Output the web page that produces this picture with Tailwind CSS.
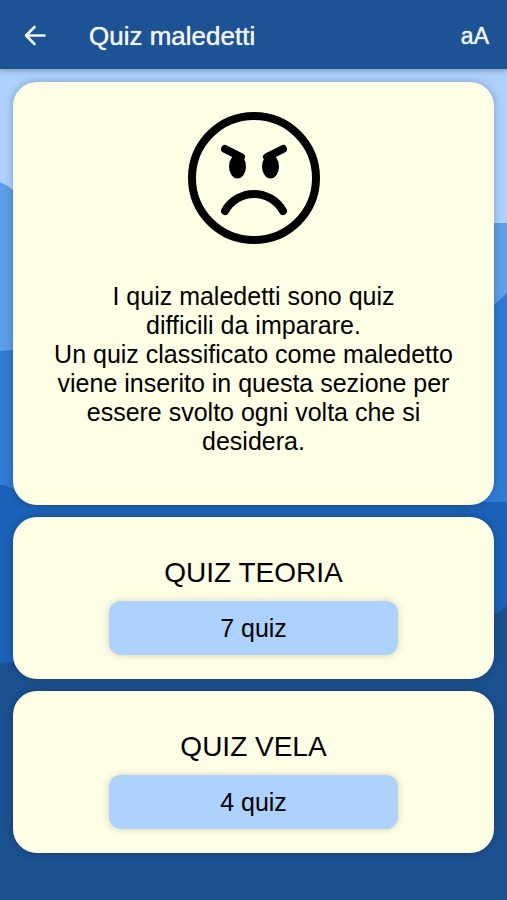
<!DOCTYPE html>
<html lang="it">
<head>
<meta charset="utf-8">
<meta name="viewport" content="width=device-width, initial-scale=1">
<title>Quiz maledetti</title>
<script src="https://cdn.jsdelivr.net/npm/@tailwindcss/browser@4"></script>
</head>
<body class="relative isolate flex min-h-screen flex-col bg-[#1b5190] font-['Liberation_Sans',Arial,sans-serif] text-black">
<!-- Layered wave background -->
<svg class="absolute inset-0 -z-10 h-full w-full" viewBox="0 0 507 900" preserveAspectRatio="none" aria-hidden="true">
<rect width="507" height="900" fill="#acd2fd"/>
<path d="M0 182Q7 185 13 190C100 250 380 223 495 223H507V900H0Z" fill="#5d9fea"/>
<path d="M0 351L13 350C150 370 400 370 495 304L507 293V900H0Z" fill="#307bd5"/>
<path d="M0 485Q7 485 13 489C150 510 380 502 495 502H507V900H0Z" fill="#1b62b8"/>
<path d="M0 663L13 662C150 640 380 640 495 614Q502 611 507 604V900H0Z" fill="#1b5190"/>
</svg>
<header class="flex h-[69px] items-center bg-[#1d5394] px-[18px] pt-[2px] text-[#eff6ff] shadow-[0_1px_6px_rgba(0,0,0,0.35)]">
<button type="button" aria-label="Indietro" class="flex size-9 shrink-0 items-center justify-center">
<svg class="size-6" viewBox="0 0 24 24" fill="none" stroke="currentColor" stroke-width="2.6" stroke-linecap="round" stroke-linejoin="round" aria-hidden="true"><path d="M20.5 11.5H2.5M10.5 3L2 11.500L10.5 20"/></svg>
</button>
<h1 class="ml-[35px] flex-1 text-[26px] leading-7 text-shadow-[0_0_1px_#eff6ff]">Quiz maledetti</h1>
<button type="button" aria-label="Dimensione testo" class="text-[23px] leading-7 text-shadow-[0_0_1px_#eff6ff]">aA</button>
</header>
<main class="flex flex-col gap-3 px-[13px] pt-[13px]">
<section class="flex flex-col items-center rounded-3xl bg-[#ffffe5] px-10 pt-[30px] pb-[49px] shadow-[0_0_8px_rgba(0,0,0,0.25)]">
<svg class="size-[132px]" viewBox="0 0 132 132" fill="none" stroke="#000" stroke-linecap="round" role="img" aria-label="Faccina arrabbiata">
<circle cx="66" cy="66" r="62" stroke-width="8"/>
<path d="M37 37L53 45M95 37L79 45" stroke-width="8"/>
<path d="M37 99A33.2 33.2 0 0 1 95 99" stroke-width="8"/>
<ellipse cx="49.5" cy="54.5" rx="8.5" ry="12" fill="#000" stroke="none"/>
<ellipse cx="82.5" cy="54.5" rx="8.5" ry="12" fill="#000" stroke="none"/>
</svg>
<p class="mt-[38px] text-center text-[25px] leading-[29px]">I quiz maledetti sono quiz<br>difficili da imparare.<br>Un quiz classificato come maledetto viene inserito in questa sezione per essere svolto ogni volta che si desidera.</p>
</section>
<section class="flex flex-col items-center rounded-3xl bg-[#ffffe5] pt-[38px] pb-6 shadow-[0_0_8px_rgba(0,0,0,0.25)]">
<h2 class="text-[28px] leading-[35px]">QUIZ TEORIA</h2>
<button type="button" class="mt-[11px] h-[54px] w-3/5 rounded-xl bg-[#acd2fd] pt-[2px] text-[25px] shadow-[0_0_9px_rgba(0,0,0,0.18)]">7 quiz</button>
</section>
<section class="flex flex-col items-center rounded-3xl bg-[#ffffe5] pt-[38px] pb-6 shadow-[0_0_8px_rgba(0,0,0,0.25)]">
<h2 class="text-[28px] leading-[35px]">QUIZ VELA</h2>
<button type="button" class="mt-[11px] h-[54px] w-3/5 rounded-xl bg-[#acd2fd] pt-[2px] text-[25px] shadow-[0_0_9px_rgba(0,0,0,0.18)]">4 quiz</button>
</section>
</main>
</body>
</html>
